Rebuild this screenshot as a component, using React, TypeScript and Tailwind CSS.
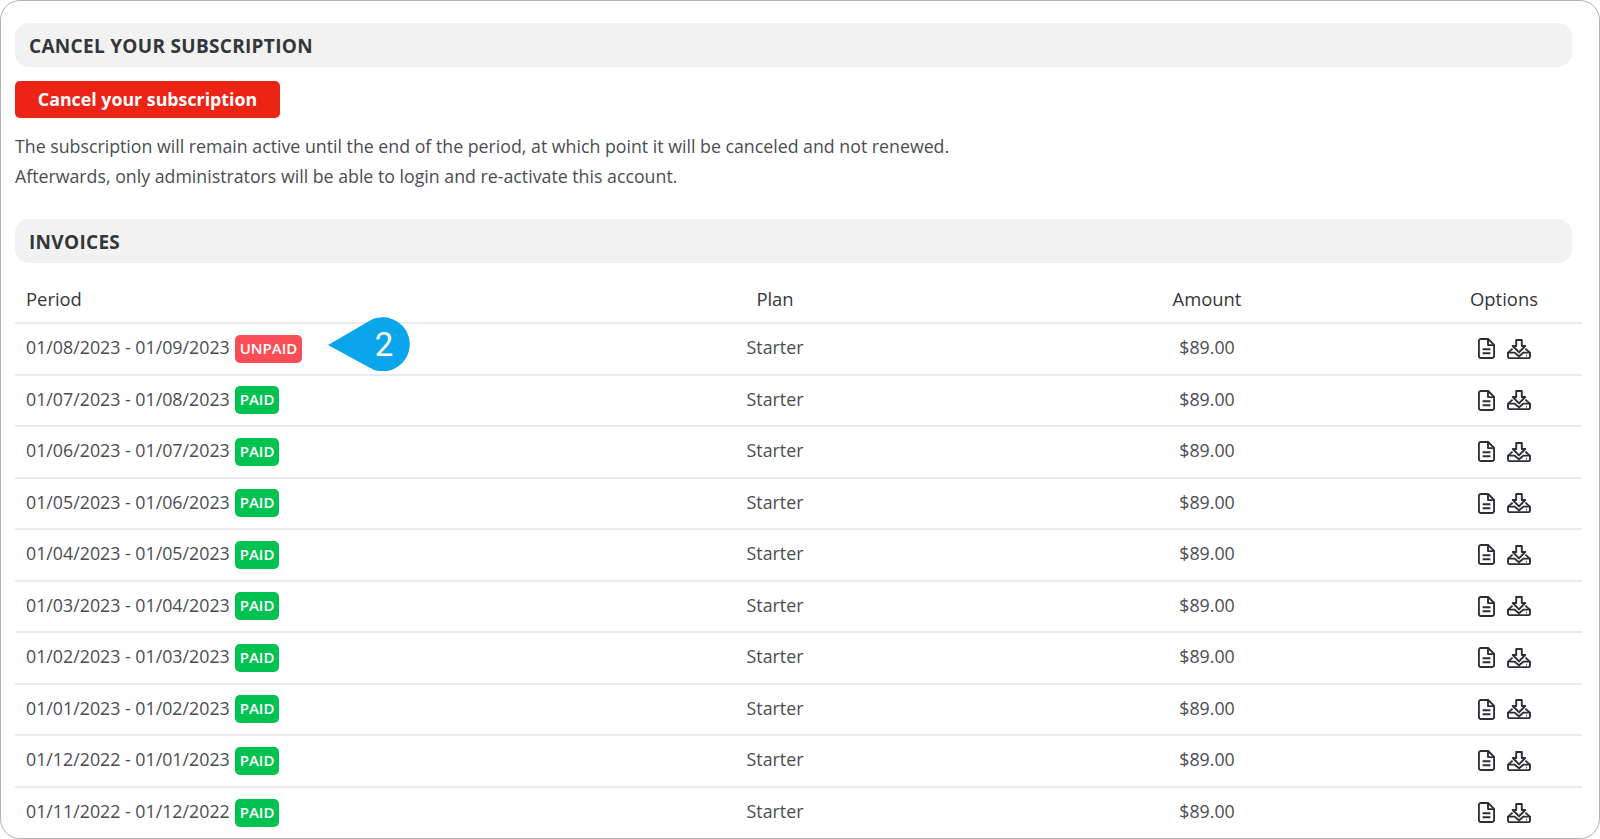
const invoices = [
  { period: "01/08/2023 - 01/09/2023", paid: false },
  { period: "01/07/2023 - 01/08/2023", paid: true },
  { period: "01/06/2023 - 01/07/2023", paid: true },
  { period: "01/05/2023 - 01/06/2023", paid: true },
  { period: "01/04/2023 - 01/05/2023", paid: true },
  { period: "01/03/2023 - 01/04/2023", paid: true },
  { period: "01/02/2023 - 01/03/2023", paid: true },
  { period: "01/01/2023 - 01/02/2023", paid: true },
  { period: "01/12/2022 - 01/01/2023", paid: true },
  { period: "01/11/2022 - 01/12/2022", paid: true },
];

function DocIcon() {
  return (
    <svg width="17" height="21" viewBox="0 0 17 21" fill="none" stroke="#2b2f38" strokeWidth="1.9" strokeLinejoin="round">
      <path d="M2.8 1h7.4l5.9 5.9v11.2a1.9 1.9 0 0 1-1.9 1.9H2.8a1.9 1.9 0 0 1-1.9-1.9V2.9A1.9 1.9 0 0 1 2.8 1z" />
      <path d="M10 1.2v5.9h5.9" />
      <path d="M4.6 11.2h7.8M4.6 15.2h7.8" />
    </svg>
  );
}

function DownloadIcon() {
  return (
    <svg width="24" height="20" viewBox="0 0 24 20" fill="none" stroke="#2b2f38" strokeWidth="1.9" strokeLinejoin="round">
      <path d="M9.2 1h5.6v6h3.4L12 13.4 5.8 7h3.4z" />
      <path d="M5.6 9.6 1.2 13.6M18.4 9.6l4.4 4" />
      <path d="M1 13.6h6.4l4.6 3.6 4.6-3.6H23v4a1.5 1.5 0 0 1-1.5 1.5h-19A1.5 1.5 0 0 1 1 17.6z" />
      <path d="M19.2 16.6h.8" strokeWidth="1.6" />
    </svg>
  );
}

function Callout() {
  return (
    <div className="absolute left-[313px] top-[-7px] h-[54px] w-[82px]">
      <svg width="82" height="54" viewBox="0 0 82 54" className="absolute inset-0">
        <path d="M0 28 L43 3 A27 27 0 1 1 45 52.5 Z" fill="#0ba5ec" />
      </svg>
      <span className="absolute left-[46px] top-[7px] w-[20px] text-center text-[33px] leading-[42px] font-normal text-white font-['Roboto',sans-serif]">
        2
      </span>
    </div>
  );
}

function SectionTitle({ children }: { children: string }) {
  return (
    <div className="flex h-[44px] items-center rounded-[14px] bg-[#f2f2f2] pl-[14px] pt-[3px] text-[19px] font-bold tracking-[0.3px] text-[#33363b]">
      {children}
    </div>
  );
}

export default function App() {
  return (
    <div className="h-[839px] w-[1600px] overflow-hidden rounded-[20px] border border-[#b3b3b3] bg-white pt-[22px] font-['Open_Sans',sans-serif] text-[#4a4d52]">
      <div className="ml-[14px] w-[1557px]">
        <SectionTitle>CANCEL YOUR SUBSCRIPTION</SectionTitle>
        <button className="mt-[14px] flex h-[37px] w-[265px] items-center justify-center rounded-[5px] bg-[#ec2415] text-[17.8px] font-bold text-white">
          Cancel your subscription
        </button>
        <p className="mt-[13px] text-[17.75px] leading-[30px]">
          The subscription will remain active until the end of the period, at which point it will be canceled and not renewed.
          <br />
          Afterwards, only administrators will be able to login and re-activate this account.
        </p>
        <div className="mt-[28px]">
          <SectionTitle>INVOICES</SectionTitle>
        </div>
      </div>

      <table className="ml-[14px] mt-[8px] w-[1567px] table-fixed border-collapse text-[17.8px]">
        <thead>
          <tr className="h-[52px] text-[#33363b]">
            <th className="w-[600px] pl-[11px] pt-[5px] text-left text-[18.4px] font-medium">Period</th>
            <th className="w-[320px] pt-[5px] text-[18.4px] font-medium">Plan</th>
            <th className="w-[444px] pl-[100px] pt-[5px] text-[18.4px] font-medium">Amount</th>
            <th className="pl-[47px] pt-[5px] text-[18.4px] font-medium">Options</th>
          </tr>
        </thead>
        <tbody>
          {invoices.map((inv, i) => (
            <tr key={inv.period} className="h-[51.5px] border-t-2 border-[#ececec]">
              <td className="relative pl-[11px]">
                <div className="flex items-center gap-[5px]">
                  <span className="mb-[2px]">{inv.period}</span>
                  <span className={`flex h-[28px] items-center rounded-[5px] px-[5px] pb-[2px] text-[15px] font-semibold text-white ${inv.paid ? "bg-[#00c251]" : "bg-[#fb4d55]"}`}>
                    {inv.paid ? "PAID" : "UNPAID"}
                  </span>
                </div>
                {i === 0 && <Callout />}
              </td>
              <td className="pb-[2px] text-center">Starter</td>
              <td className="pb-[2px] pl-[100px] text-center">$89.00</td>
              <td className="pl-[48px]">
                <div className="flex items-center justify-center gap-[12px]">
                  <DocIcon />
                  <DownloadIcon />
                </div>
              </td>
            </tr>
          ))}
        </tbody>
      </table>
    </div>
  );
}
